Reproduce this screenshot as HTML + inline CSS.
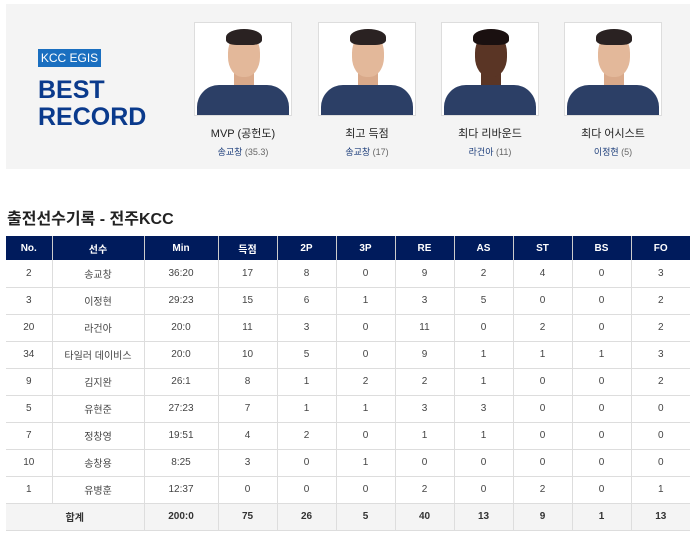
<!DOCTYPE html>
<html><head><meta charset="utf-8"><style>
*{margin:0;padding:0;box-sizing:border-box}
body{width:695px;height:539px;background:#fff;font-family:"Liberation Sans","Noto Sans CJK KR",sans-serif;position:relative;overflow:hidden}
.box{position:absolute;left:6px;top:4px;width:684px;height:165px;background:#f4f4f4}
.tag{position:absolute;left:38px;top:49px;width:63px;height:18px;background:#1a6fc0;color:#fff;font-size:12px;line-height:18px;text-align:center}
.best{position:absolute;left:38px;top:77px;color:#0a3a8c;font-size:25px;font-weight:bold;line-height:27px}
.p{position:absolute;top:22px;width:98px;text-align:center}
.ph{width:98px;height:94px;background:#fff;border:1px solid #ddd;position:relative;overflow:hidden}
.ph .j{position:absolute;left:2px;right:2px;bottom:0;height:30px;background:#2c3f66;border-radius:22px 22px 0 0}
.ph .n{position:absolute;left:33px;top:10px;width:32px;height:44px;background:#e3b89a;border-radius:45%}
.ph .h{position:absolute;left:31px;top:6px;width:36px;height:16px;background:#2a2222;border-radius:50% 50% 30% 30%}
.ph .ne{position:absolute;left:39px;top:48px;width:20px;height:22px;background:#d9a98a}
.t1{font-size:11px;color:#222;margin-top:9px}
.t2{font-size:9px;color:#1c3d7a;margin-top:4px}
.t2 span{color:#666}
h2{position:absolute;left:7px;top:205px;font-size:16px;font-weight:bold;color:#222}
table{position:absolute;left:6px;top:236px;width:684px;border-collapse:collapse;font-size:10px;color:#444}
th{background:#001b5c;color:#fff;height:24px;font-weight:bold;border-left:1px solid #ccc}
th:first-child{border-left:none}
td{height:27px;text-align:center;border-bottom:1px solid #ddd;border-left:1px solid #ddd}
td:first-child{border-left:none}
tr.sum td{background:#f4f4f4;font-weight:bold;color:#333;height:27px}
</style></head><body>
<div class="box"></div>
<div class="tag">KCC EGIS</div>
<div class="best">BEST<br>RECORD</div>
<div class="p" style="left:194px"><div class="ph"><div class="ne"></div><div class="j"></div><div class="n"></div><div class="h"></div></div><div class="t1">MVP (공헌도)</div><div class="t2">송교창 <span>(35.3)</span></div></div>
<div class="p" style="left:318px"><div class="ph"><div class="ne"></div><div class="j"></div><div class="n"></div><div class="h"></div></div><div class="t1">최고 득점</div><div class="t2">송교창 <span>(17)</span></div></div>
<div class="p" style="left:441px"><div class="ph"><div class="ne" style="background:#5a3525"></div><div class="j"></div><div class="n" style="background:#5a3525"></div><div class="h" style="background:#1a1010"></div></div><div class="t1">최다 리바운드</div><div class="t2">라건아 <span>(11)</span></div></div>
<div class="p" style="left:564px"><div class="ph"><div class="ne"></div><div class="j"></div><div class="n"></div><div class="h"></div></div><div class="t1">최다 어시스트</div><div class="t2">이정현 <span>(5)</span></div></div>
<h2>출전선수기록 - 전주KCC</h2>
<table>
<colgroup><col style="width:46px"><col style="width:92px"><col style="width:74px"><col style="width:59px"><col style="width:59px"><col style="width:59px"><col style="width:59px"><col style="width:59px"><col style="width:59px"><col style="width:59px"><col style="width:59px"></colgroup>
<tr><th>No.</th><th>선수</th><th>Min</th><th>득점</th><th>2P</th><th>3P</th><th>RE</th><th>AS</th><th>ST</th><th>BS</th><th>FO</th></tr>
<tr><td>2</td><td>송교창</td><td>36:20</td><td>17</td><td>8</td><td>0</td><td>9</td><td>2</td><td>4</td><td>0</td><td>3</td></tr>
<tr><td>3</td><td>이정현</td><td>29:23</td><td>15</td><td>6</td><td>1</td><td>3</td><td>5</td><td>0</td><td>0</td><td>2</td></tr>
<tr><td>20</td><td>라건아</td><td>20:0</td><td>11</td><td>3</td><td>0</td><td>11</td><td>0</td><td>2</td><td>0</td><td>2</td></tr>
<tr><td>34</td><td>타일러 데이비스</td><td>20:0</td><td>10</td><td>5</td><td>0</td><td>9</td><td>1</td><td>1</td><td>1</td><td>3</td></tr>
<tr><td>9</td><td>김지완</td><td>26:1</td><td>8</td><td>1</td><td>2</td><td>2</td><td>1</td><td>0</td><td>0</td><td>2</td></tr>
<tr><td>5</td><td>유현준</td><td>27:23</td><td>7</td><td>1</td><td>1</td><td>3</td><td>3</td><td>0</td><td>0</td><td>0</td></tr>
<tr><td>7</td><td>정창영</td><td>19:51</td><td>4</td><td>2</td><td>0</td><td>1</td><td>1</td><td>0</td><td>0</td><td>0</td></tr>
<tr><td>10</td><td>송창용</td><td>8:25</td><td>3</td><td>0</td><td>1</td><td>0</td><td>0</td><td>0</td><td>0</td><td>0</td></tr>
<tr><td>1</td><td>유병훈</td><td>12:37</td><td>0</td><td>0</td><td>0</td><td>2</td><td>0</td><td>2</td><td>0</td><td>1</td></tr>
<tr class="sum"><td colspan="2" style="border-left:none">합계</td><td>200:0</td><td>75</td><td>26</td><td>5</td><td>40</td><td>13</td><td>9</td><td>1</td><td>13</td></tr>
</table>
</body></html>
